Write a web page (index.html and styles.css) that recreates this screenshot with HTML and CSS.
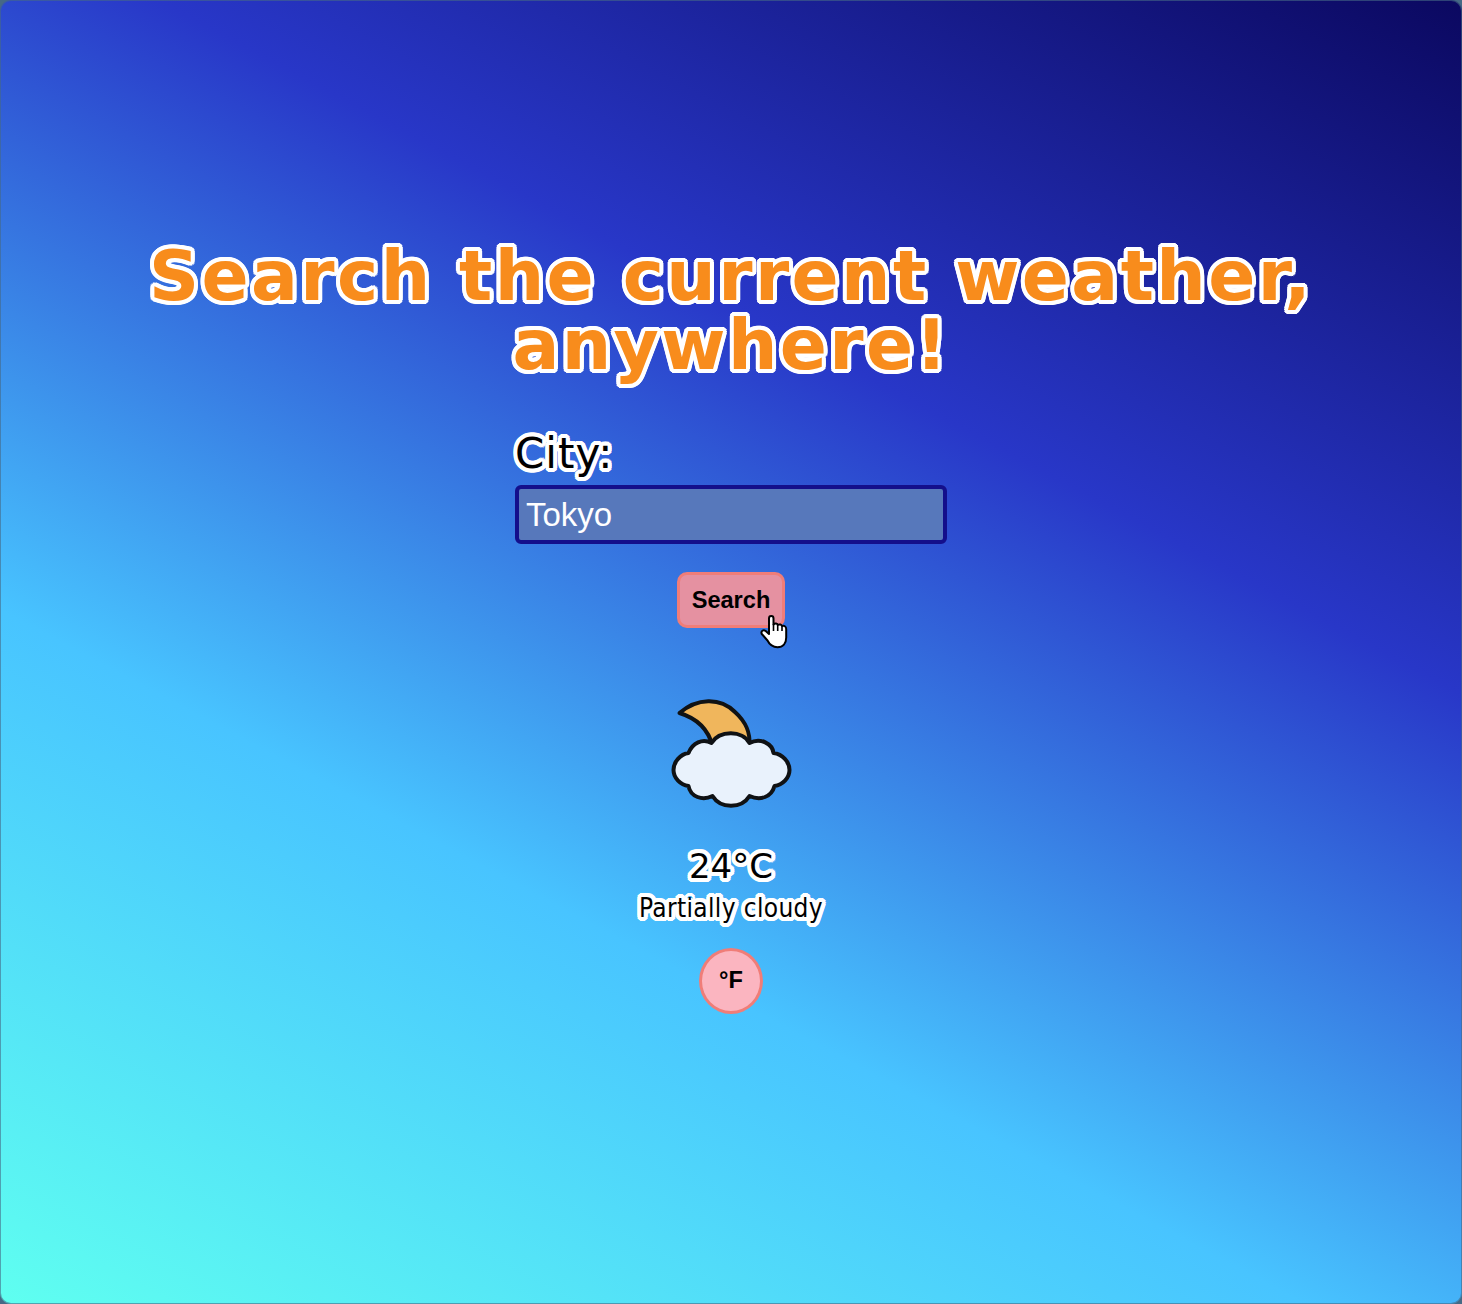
FILE: index.html
```html
<!DOCTYPE html>
<html lang="en">
<head>
<meta charset="utf-8">
<title>Weather search</title>
<link rel="stylesheet" href="styles.css">
</head>
<body>
<main class="app">
  <h1 class="title outlined">Search the current weather, anywhere!</h1>
  <form class="search">
    <label class="label outlined" for="city">City:</label>
    <input class="field" id="city" type="text" value="Tokyo">
    <button class="button" type="button">Search
      <svg class="pointer" width="30" height="36" viewBox="0 0 30 36">
        <path d="M9 4.500C9 1.200 13.500 1.200 13.500 4.500V10.500C15 8.800 17.500 9.300 17.700 11C19.500 9.800 21.700 10.500 22 12.200C24 11.300 26.200 12.300 26.200 15V23.500C26.200 29.500 23 33.200 17.500 33.200C12.500 33.200 9.500 30.500 7.500 26.500L1.800 20C.5 17.200 3.300 15.200 5.700 17L9 20Z" fill="#fff" stroke="#000" stroke-width="2" stroke-linejoin="round"/>
        <path d="M13.500 10V17M17.700 11V17M22 12.500V17" fill="none" stroke="#000" stroke-width="1.600"/>
      </svg>
    </button>
  </form>
  <section class="result">
    <svg class="icon" width="124" height="114" viewBox="0 0 124 114">
      <g stroke="#101214" stroke-width="4" stroke-linejoin="round">
        <path d="M10.500 17C28 2 51 1 66 16C77 26 81.500 36 80.500 50L43.500 50C40 36 30 23 10.500 17Z" fill="#f0b65c"/>
        <path transform="translate(.5 1)" d="M42 46C50 33 73 33 80 46C91 40 103 47 104 56C113 57 120 65 120 73C120 81 113 88 105 89C102 100 91 104 80 99C72 112 51 112 43 99C33 104 21 100 19 89C11 88 4 81 4 73C4 65 11 57 19 56C23 46 33 41 42 46Z" fill="#e9f2fc"/>
      </g>
    </svg>
    <p class="temperature outlined">24°C</p>
    <p class="condition outlined">Partially cloudy</p>
    <button class="button unit" type="button">°F</button>
  </section>
</main>
</body>
</html>
```
FILE: styles.css
```css
* { box-sizing: border-box; }

body {
  margin: 0;
  background: #466985;
  font-family: "DejaVu Sans", sans-serif;
}

.app {
  height: 1304px;
  padding-top: 240px;
  border: 1px solid rgba(70, 105, 133, .6);
  border-radius: 11px;
  background: linear-gradient(28deg, #5ffff0 0%, #48c4ff 33.33%, #2837c8 66.66%, #0b0860 100%) border-box;
  display: flex;
  flex-direction: column;
  align-items: center;
}

/* White ring around the glyphs, drawn from sixteen offsets. */
.outlined {
  --r: 4px;
  --a: calc(var(--r) * .924);
  --b: calc(var(--r) * .707);
  --c: calc(var(--r) * .383);
  text-shadow:
    var(--r) 0 #fff, var(--a) var(--c) #fff, var(--b) var(--b) #fff, var(--c) var(--a) #fff,
    0 var(--r) #fff, calc(var(--c) * -1) var(--a) #fff, calc(var(--b) * -1) var(--b) #fff, calc(var(--a) * -1) var(--c) #fff,
    calc(var(--r) * -1) 0 #fff, calc(var(--a) * -1) calc(var(--c) * -1) #fff, calc(var(--b) * -1) calc(var(--b) * -1) #fff, calc(var(--c) * -1) calc(var(--a) * -1) #fff,
    0 calc(var(--r) * -1) #fff, var(--c) calc(var(--a) * -1) #fff, var(--b) calc(var(--b) * -1) #fff, var(--a) calc(var(--c) * -1) #fff;
}

.title {
  width: 1260px;
  margin: 0;
  color: #f88c1c;
  font-size: 69.500px;
  line-height: 69px;
  font-weight: bold;
  letter-spacing: 2.400px;
  text-align: center;
}

.search {
  width: 432px;
  margin-top: 50px;
  display: flex;
  flex-direction: column;
}

.label {
  font-size: 42px;
  line-height: 50px;
  letter-spacing: 1px;
}

.field {
  height: 59px;
  margin-top: 6px;
  padding: 0 7px;
  border: 4px solid #140f8b;
  border-radius: 6px;
  background: #5778bb;
  color: #fff;
  font: 33px/40px "Liberation Sans", Arial, sans-serif;
  outline: 0;
}

.button {
  position: relative;
  align-self: center;
  width: 108px;
  height: 56px;
  margin-top: 28px;
  padding: 0;
  border: 3px solid #f07d78;
  border-radius: 10px;
  background: #e591a1;
  color: #000;
  font: bold 23.600px "Liberation Sans", Arial, sans-serif;
}

.pointer {
  position: absolute;
  left: 80px;
  top: 39px;
}

.result {
  margin-top: 68px;
  display: flex;
  flex-direction: column;
  align-items: center;
}

.temperature {
  margin: 35px 0 0;
  font-size: 34px;
  line-height: 42px;
}

.condition {
  margin: 0;
  font-family: "DejaVu Sans Condensed", "DejaVu Sans", sans-serif;
  font-size: 26px;
  line-height: 42px;
  letter-spacing: .35px;
}

.unit {
  width: 64px;
  height: 66px;
  margin-top: 19px;
  padding-bottom: 2px;
  border-radius: 50%;
  background: #fbb5c0;
}
```
